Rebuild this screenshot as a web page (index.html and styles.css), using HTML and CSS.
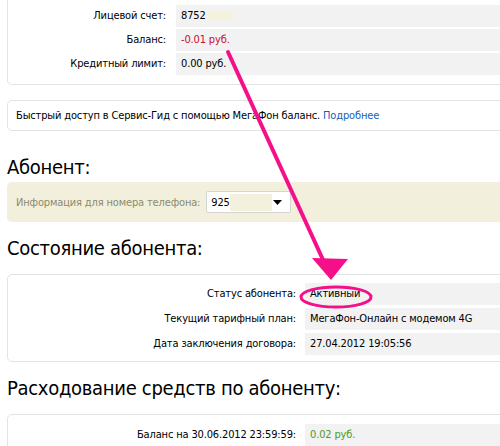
FILE: index.html
```html
<!DOCTYPE html>
<html lang="ru">
<head>
<meta charset="utf-8">
<link rel="stylesheet" href="styles.css">
</head>
<body>
<div class="page">
  <section class="card card-top">
    <div class="grid g1">
      <div class="lbl">Лицевой счет:</div>
      <div class="val">8752<span class="blur b1"></span></div>
      <div class="lbl">Баланс:</div>
      <div class="val neg">-0.01 руб.</div>
      <div class="lbl">Кредитный лимит:</div>
      <div class="val">0.00 руб.</div>
    </div>
  </section>

  <section class="card note">Быстрый доступ в Сервис-Гид с помощью МегаФон баланс. <a class="link" href="#">Подробнее</a></section>

  <h2 class="title title-first">Абонент:</h2>

  <div class="phone-box">
    <span class="phone-label">Информация для номера телефона:</span>
    <div class="select">
      <span class="sel-text">925</span><span class="blur b2"></span>
      <svg class="caret" width="9" height="5" viewBox="0 0 9 5"><path d="M0 0H9L4.5 5Z" fill="#000"/></svg>
    </div>
  </div>

  <h2 class="title">Состояние абонента:</h2>

  <section class="card">
    <div class="grid g2">
      <div class="lbl">Статус абонента:</div>
      <div class="val">Активный</div>
      <div class="lbl">Текущий тарифный план:</div>
      <div class="val">МегаФон-Онлайн с модемом 4G</div>
      <div class="lbl">Дата заключения договора:</div>
      <div class="val">27.04.2012 19:05:56</div>
    </div>
  </section>

  <h2 class="title">Расходование средств по абоненту:</h2>

  <section class="card">
    <div class="grid g2 g-last">
      <div class="lbl">Баланс на 30.06.2012 23:59:59:</div>
      <div class="val pos">0.02 руб.</div>
    </div>
  </section>

  <svg class="annot" width="500" height="446" viewBox="0 0 500 446">
    <line x1="228" y1="52" x2="324" y2="262" stroke="#f5108a" stroke-width="4" stroke-linecap="round"/>
    <path d="M312 258 L348 259 L331 280 Z" fill="#f5108a"/>
    <ellipse cx="336" cy="297" rx="35" ry="10" fill="none" stroke="#f5108a" stroke-width="3"/>
  </svg>
</div>
</body>
</html>
```

FILE: styles.css
```css
html, body {
  margin: 0;
  padding: 0;
  background: #fff;
}
body {
  width: 500px;
  height: 446px;
  overflow: hidden;
  font-family: "DejaVu Sans Condensed", "DejaVu Sans", sans-serif;
  font-size: 11px;
  letter-spacing: -0.15px;
  color: #000;
}
.page {
  position: relative;
  width: 540px;
  padding-left: 7px;
}
.card {
  border: 1px solid #e3e3e3;
  border-radius: 5px;
  background: #fff;
}
.card-top {
  border-top: none;
  border-radius: 0 0 5px 5px;
  padding: 5px 0 9px;
}
.grid {
  display: grid;
}
.g1 { grid-template-columns: 162px 1fr; column-gap: 6px; row-gap: 2px; }
.g2 { grid-template-columns: 292px 1fr; column-gap: 5px; row-gap: 3px; padding: 8px 0 6px; }
.g-last { padding-top: 9px; }
.lbl {
  text-align: right;
  padding-right: 4px;
  line-height: 22px;
  height: 22px;
}
.val {
  background: #f2f2f2;
  padding-left: 5px;
  line-height: 22px;
  height: 22px;
  display: flex;
  align-items: center;
}
.neg { color: #c8102e; }
.pos { color: #4c9a2a; }
.blur {
  display: inline-block;
  background: #f4f2dc;
}
.b1 { width: 26px; height: 8px; margin-left: 1px; }
.note {
  margin-top: 15px;
  padding: 0 8px;
  height: 29px;
  line-height: 30px;
}
.link { color: #1a5fb4; text-decoration: none; }
.title {
  margin: 0;
  font-weight: normal;
  font-size: 20px;
  letter-spacing: -0.3px;
  line-height: 24px;
  padding: 14px 0 14px;
}
.title-first { padding: 24px 0 3px; }
.phone-box {
  background: #f2f0dc;
  border-radius: 5px;
  height: 40px;
  display: flex;
  align-items: center;
  padding-left: 9px;
}
.phone-label { color: #8b8a6e; }
.select {
  margin-left: 6px;
  width: 85px;
  height: 22px;
  background: #fff;
  border: 1px solid #d4d4d4;
  border-radius: 2px;
  display: flex;
  align-items: center;
  padding-left: 4px;
  box-sizing: border-box;
  position: relative;
}
.b2 { width: 42px; height: 17px; background: #f3f1dd; }
.caret { position: absolute; right: 8px; top: 8px; }
.annot {
  position: absolute;
  left: 0;
  top: 0;
  pointer-events: none;
}
```
